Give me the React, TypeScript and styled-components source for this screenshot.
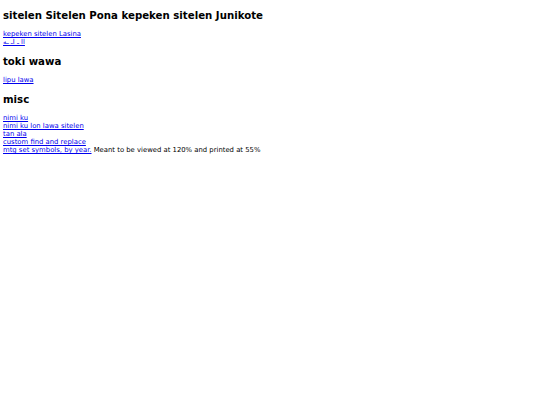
import React from "react";
import styled, { createGlobalStyle } from "styled-components";

const Global = createGlobalStyle`
  html, body { margin: 0; padding: 0; background: #fff; }
  body {
    font-family: "DejaVu Sans", sans-serif;
    font-size: 6.85px;
    line-height: 8px;
    color: #000;
  }
`;

const Page = styled.div`
  padding: 0 3px;
  display: flow-root;
`;

const Heading = styled.h1`
  font-family: "DejaVu Sans", sans-serif;
  font-weight: bold;
  font-size: 10.2px;
  line-height: 12px;
  margin: 10px 0 8px;
`;

const Section = styled.section`
  display: block;
`;

const LinkList = styled.div`
  display: flex;
  flex-direction: column;
`;

const Line = styled.div`
  white-space: nowrap;
`;

const A = styled.a`
  color: #0000ee;
  text-decoration: underline;
`;

const Glyphs = styled(A)`
  direction: ltr;
  unicode-bidi: bidi-override;
`;

const Note = styled.span`
  color: #000;
`;

export default function App() {
  return (
    <>
      <Global />
      <Page>
        <Section>
          <Heading>sitelen Sitelen Pona kepeken sitelen Junikote</Heading>
          <LinkList>
            <Line><A href="#">kepeken sitelen Lasina</A></Line>
            <Line><Glyphs href="#">هـ ـا ـ اا</Glyphs></Line>
          </LinkList>
        </Section>
        <Section>
          <Heading>toki wawa</Heading>
          <LinkList>
            <Line><A href="#">lipu lawa</A></Line>
          </LinkList>
        </Section>
        <Section>
          <Heading>misc</Heading>
          <LinkList>
            <Line><A href="#">nimi ku</A></Line>
            <Line><A href="#">nimi ku lon lawa sitelen</A></Line>
            <Line><A href="#">tan ala</A></Line>
            <Line><A href="#">custom find and replace</A></Line>
            <Line>
              <A href="#">mtg set symbols, by year.</A>{" "}
              <Note>Meant to be viewed at 120% and printed at 55%</Note>
            </Line>
          </LinkList>
        </Section>
      </Page>
    </>
  );
}
